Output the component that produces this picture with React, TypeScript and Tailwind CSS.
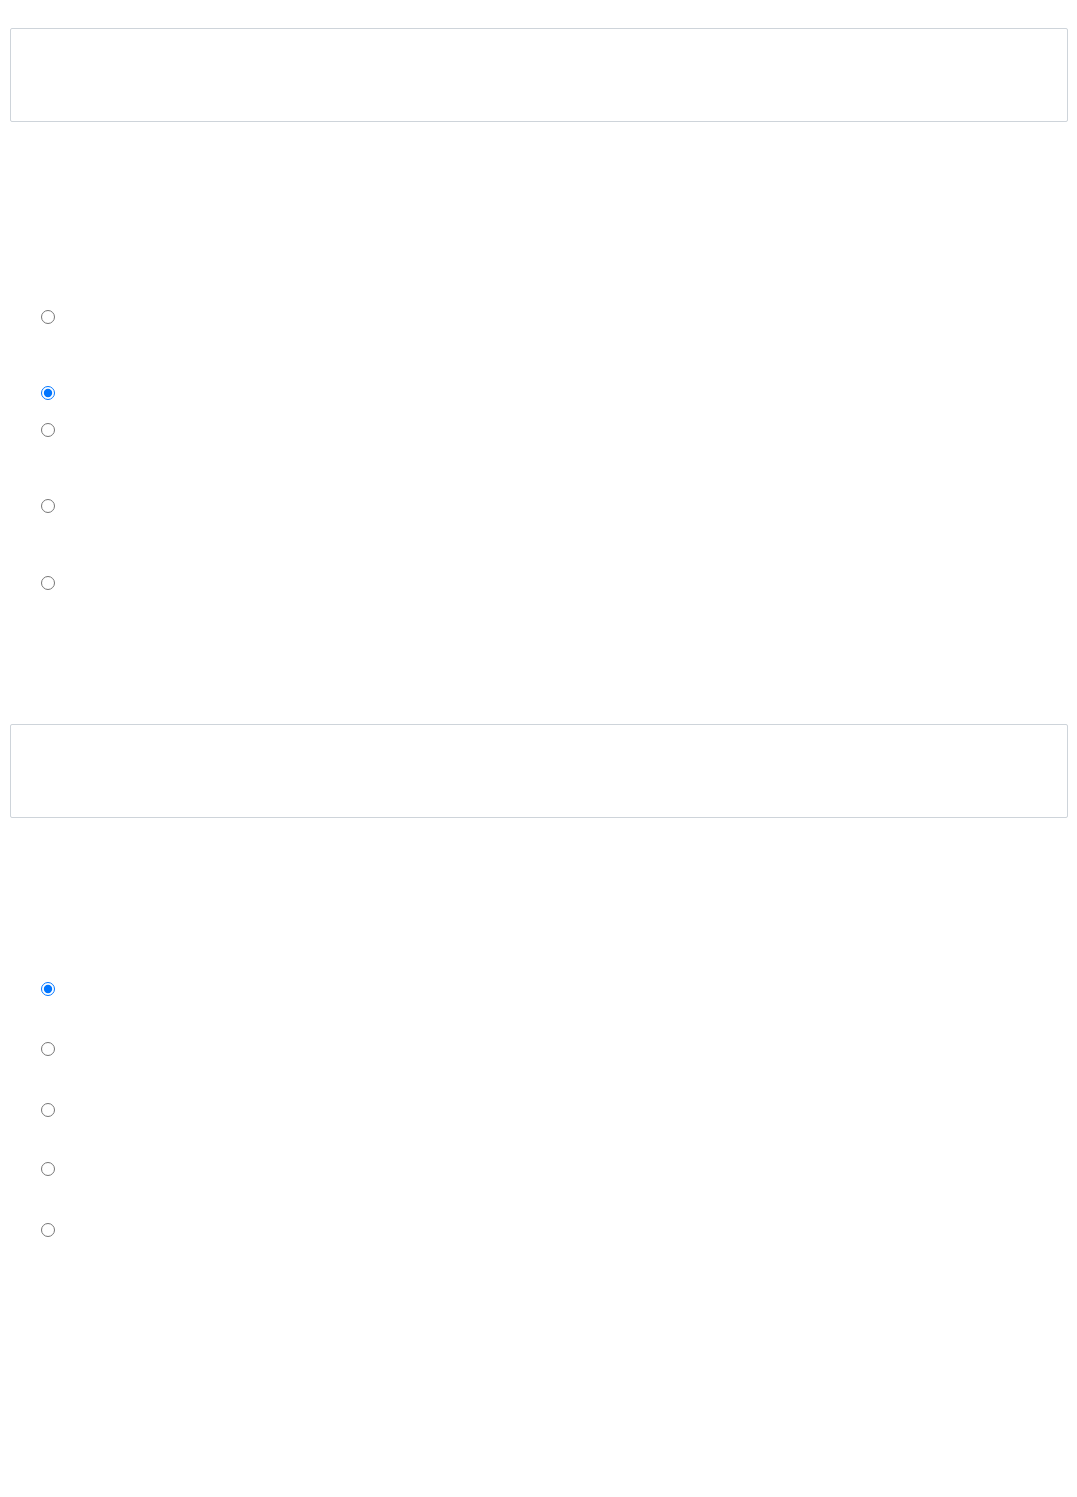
import React from "react";

const Box = () => (
  <div className="h-[94px] w-[1058px] border border-[#ced4da] rounded-[2px] bg-white" />
);

const Radio = ({ name, checked, mt }: { name: string; checked?: boolean; mt: string }) => (
  <input
    type="radio"
    name={name}
    defaultChecked={checked}
    className={`block m-0 ml-[40.5px] size-[14px] ${mt}`}
  />
);

export default function App() {
  return (
    <div className="min-h-[1497px] bg-white pt-[28px] font-['Liberation_Sans',sans-serif]">
      <div className="pl-[10px]">
        <Box />
      </div>

      <div className="flex flex-col">
        <Radio name="q1" mt="mt-[188px]" />
        <Radio name="q1" mt="mt-[62px]" checked />
        <Radio name="q1" mt="mt-[23px]" />
        <Radio name="q1" mt="mt-[62px]" />
        <Radio name="q1" mt="mt-[63px]" />
      </div>

      <div className="pl-[10px] mt-[134px]">
        <Box />
      </div>

      <div className="flex flex-col">
        <Radio name="q2" mt="mt-[164px]" checked />
        <Radio name="q2" mt="mt-[46px]" />
        <Radio name="q2" mt="mt-[47px]" />
        <Radio name="q2" mt="mt-[45px]" />
        <Radio name="q2" mt="mt-[47px]" />
      </div>
    </div>
  );
}
